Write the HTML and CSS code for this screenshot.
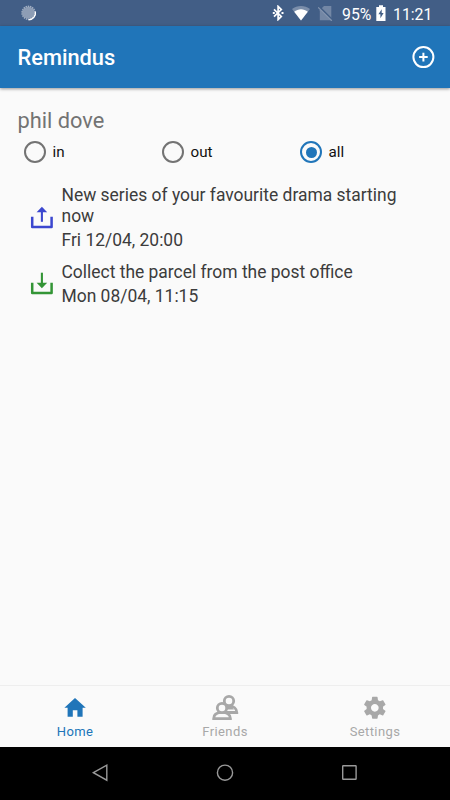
FILE: index.html
```html
<!DOCTYPE html>
<html lang="en">
<head>
    <meta charset="UTF-8">
    <meta name="viewport" content="width=device-width, initial-scale=1.0">
    <title>Remindus</title>
    <link rel="stylesheet" href="styles.css">
</head>
<body>

<div class="screen">
    <!-- Status bar -->
    <div class="status-bar">
        <svg class="sync-icon" width="16" height="16" viewBox="0 0 16 16">
            <circle cx="7.5" cy="7.8" r="6" fill="#8d9db5"/>
            <circle cx="7.5" cy="7.8" r="6.4" fill="none" stroke="#a0aec2" stroke-width="1.6" stroke-dasharray="1.5 0.7"/>
            <path d="M14.4 6.5A7 7 0 0 1 7.5 14.8" fill="none" stroke="#fff" stroke-width="1.3"/>
        </svg>
        <div class="status-right">
            <svg class="bluetooth" width="12" height="16" viewBox="0 0 12 16">
                <path d="M2 4.3L9.3 11.4L6.1 14.6V1.4L9.3 4.6L2 11.7" fill="none" stroke="#fff" stroke-width="1.7"/>
                <path d="M0.8 7h2v2h-2zM9.5 7h2v2h-2z" fill="#fff"/>
            </svg>
            <svg class="wifi" width="18" height="16" viewBox="0 0 18 16">
                <path d="M0 4C5 0 13 0 18 4L9 15.5z" fill="#7b8eaa"/>
                <path d="M2.2 6.7C6.2 3.3 11.8 3.3 15.8 6.7L9 15.5z" fill="#fff"/>
            </svg>
            <svg class="sim" width="15" height="16" viewBox="0 0 15 16">
                <path d="M6 1h7.3v14.2H1.8V5.2z" fill="#7387a5"/>
                <path d="M0.8 1.5L14.6 15.2" stroke="#425e86" stroke-width="2"/>
                <path d="M0.2 2.4L13.8 15.8" stroke="#8495af" stroke-width="1.2"/>
            </svg>
            <span class="percent">95%</span>
            <svg class="battery" width="10" height="16" viewBox="0 0 10 16">
                <path d="M3 0.3h4v1.6h2.5V16H0.3V1.9H3z" fill="#fff"/>
                <path d="M5.7 4.2L2.4 9.3h2v3.9l3.2-5.3h-1.9z" fill="#425e86"/>
            </svg>
            <span class="clock">11:21</span>
        </div>
    </div>

    <!-- App header -->
    <header class="header">
        <h1 class="title">Remindus</h1>
        <svg class="add" width="24" height="24" viewBox="0 0 24 24" fill="none" stroke="#fff" stroke-width="2">
            <circle cx="12.4" cy="12.1" r="10"/>
            <path d="M12.4 7.8v8.6M8.1 12.1h8.6"/>
        </svg>
    </header>

    <!-- Reminders -->
    <main class="content">
        <h2 class="user">phil dove</h2>
        <div class="filters">
            <div class="filter"><span class="radio"></span>in</div>
            <div class="filter"><span class="radio"></span>out</div>
            <div class="filter"><span class="radio checked"></span>all</div>
        </div>

        <div class="reminder">
            <svg class="arrow-icon" width="24" height="24" viewBox="0 0.5 24 24" fill="none" stroke="#3b47cf">
                <path d="M2.2 11.3V21.4H21.6V11.3" stroke-width="2.5" stroke-linejoin="round"/>
                <path d="M11.9 16.3V5" stroke-width="2.1"/>
                <path d="M11.9 1.2L17.2 6.7H6.6z" fill="#3b47cf" stroke="none"/>
            </svg>
            <div class="details">
                <p class="text">New series of your favourite drama starting now</p>
                <p class="date">Fri 12/04, 20:00</p>
            </div>
        </div>
        <div class="reminder">
            <svg class="arrow-icon" width="24" height="24" viewBox="0 0.5 24 24" fill="none" stroke="#339536">
                <path d="M2.2 11.3V21.4H21.6V11.3" stroke-width="2.5" stroke-linejoin="round"/>
                <path d="M11.9 1.2V13" stroke-width="2.1"/>
                <path d="M11.9 16.8L17.2 11.3H6.6z" fill="#339536" stroke="none"/>
            </svg>
            <div class="details">
                <p class="text">Collect the parcel from the post office</p>
                <p class="date">Mon 08/04, 11:15</p>
            </div>
        </div>
    </main>

    <!-- Tabs -->
    <nav class="tabs">
        <div class="tab active">
            <svg width="28" height="28" viewBox="0 0 28 28">
                <path d="M14 4L24.8 13.7H21.6V22.7H16.4V16.2H11.8V22.7H6.6V13.7H3.4z" fill="currentColor"/>
            </svg>
            <span>Home</span>
        </div>
        <div class="tab">
            <svg width="28" height="28" viewBox="0 0 28 28" fill="#fafafa" stroke="currentColor" stroke-width="2.8">
                <path d="M10.5 18.5H25.8C25.8 14.5 22.5 12 18 12S10.5 14.5 10.5 18.5z"/>
                <path d="M12 12H20L23 15.4H14z" fill="currentColor" stroke="none"/>
                <circle cx="18" cy="7" r="4.7"/>
                <path d="M2.7 24.6H19.4C19.4 20.6 16 18.4 11 18.4S2.7 20.6 2.7 24.6z"/>
                <circle cx="11" cy="14" r="4.7"/>
            </svg>
            <span>Friends</span>
        </div>
        <div class="tab">
            <svg width="28" height="28" viewBox="1 1 26 26">
                <g transform="translate(1.6 1.6) scale(1.02)">
                    <path fill="currentColor" d="M19.43 12.98c.04-.32.07-.64.07-.98s-.03-.66-.07-.98l2.11-1.65c.19-.15.24-.42.12-.64l-2-3.46c-.12-.22-.39-.3-.61-.22l-2.49 1c-.52-.4-1.08-.73-1.69-.98l-.38-2.65C14.46 2.18 14.25 2 14 2h-4c-.25 0-.46.18-.49.42l-.38 2.65c-.61.25-1.17.59-1.69.98l-2.49-1c-.23-.09-.49 0-.61.22l-2 3.46c-.13.22-.07.49.12.64l2.11 1.65c-.04.32-.07.65-.07.98s.03.66.07.98l-2.11 1.65c-.19.15-.24.42-.12.64l2 3.46c.12.22.39.3.61.22l2.49-1c.52.4 1.08.73 1.69.98l.38 2.65c.03.24.24.42.49.42h4c.25 0 .46-.18.49-.42l.38-2.65c.61-.25 1.17-.59 1.69-.98l2.49 1c.23.09.49 0 .61-.22l2-3.46c.12-.22.07-.49-.12-.64l-2.11-1.65zM12 15.5c-1.93 0-3.5-1.57-3.5-3.5s1.57-3.5 3.5-3.5 3.5 1.57 3.5 3.5-1.57 3.5-3.5 3.5z"/>
                </g>
            </svg>
            <span>Settings</span>
        </div>
    </nav>

    <!-- System navigation -->
    <div class="system-nav">
        <svg width="18" height="18" viewBox="0 0 18 18"><path d="M2.4 8.7L15.8 1.2V16.2z"/></svg>
        <svg width="18" height="18" viewBox="0 0 18 18"><circle cx="9" cy="8.7" r="7.6"/></svg>
        <svg width="18" height="18" viewBox="0 0 18 18"><rect x="1.7" y="1.8" width="13.4" height="13.4" rx="0.5"/></svg>
    </div>
</div>

</body>
</html>
```
FILE: styles.css
```css
* {
    box-sizing: border-box;
    margin: 0;
    padding: 0;
}

body {
    font-family: Roboto, "Liberation Sans", sans-serif;
    background: #fafafa;
}

svg {
    display: block;
    flex-shrink: 0;
}

.screen {
    display: flex;
    flex-direction: column;
    width: 450px;
    height: 800px;
    overflow: hidden;
}

.status-bar {
    display: flex;
    justify-content: space-between;
    height: 26px;
    padding: 5px 18px 0 21px;
    background: #425e86;
    color: #fff;
    font-size: 15.8px;
    line-height: 19px;
}

.status-right {
    display: flex;
}

.wifi {
    margin-left: 8px;
}

.sim {
    margin-left: 8px;
}

.percent {
    width: 28px;
    margin-left: 9px;
    white-space: nowrap;
}

.battery {
    margin-left: 6px;
}

.clock {
    width: 39px;
    margin-left: 7px;
    white-space: nowrap;
}

.header {
    display: flex;
    align-items: center;
    justify-content: space-between;
    height: 62px;
    padding: 0 15px 0 17.5px;
    background: #2075b9;
    box-shadow: 0 1px 3px rgba(0, 0, 0, 0.4);
    color: #fff;
}

.title {
    padding-top: 2px;
    font-size: 21.8px;
    font-weight: 500;
    line-height: 26px;
}

.content {
    flex: 1;
    padding: 19px 18px 0 17.5px;
}

.user {
    color: #737373;
    font-size: 21.8px;
    font-weight: 400;
    line-height: 28px;
}

.filters {
    display: grid;
    grid-template-columns: repeat(3, 138px);
    height: 34px;
    padding: 0 6.5px;
}

.filter {
    display: flex;
    align-items: center;
    height: 34px;
    color: #111;
    font-size: 15.2px;
    line-height: 20px;
}

.radio {
    width: 22px;
    height: 22px;
    margin-right: 6.5px;
    border: 2px solid #737373;
    border-radius: 50%;
}

.radio.checked {
    padding: 3.5px;
    border-color: #2075b9;
}

.radio.checked::before {
    content: "";
    display: block;
    height: 100%;
    border-radius: 50%;
    background: #2075b9;
}

.reminder {
    display: flex;
    align-items: center;
    margin-top: 16px;
    padding-left: 12px;
}

.reminder + .reminder {
    margin-top: 11px;
}

.arrow-icon {
    margin-bottom: 1px;
}

.details {
    width: 345px;
    margin-left: 8px;
    color: #3c3c3c;
    font-size: 17.45px;
}

.text {
    line-height: 21px;
}

.date {
    margin-top: 3px;
    line-height: 21px;
}

.tabs {
    display: grid;
    grid-template-columns: repeat(3, 1fr);
    height: 62px;
    border-top: 1px solid #eee;
}

.tab {
    display: flex;
    flex-direction: column;
    align-items: center;
    padding-top: 8px;
    color: #a8a8a8;
    font-size: 13px;
    letter-spacing: 0.4px;
    line-height: 20px;
}

.tab.active {
    color: #2075b9;
}

.system-nav {
    display: flex;
    justify-content: center;
    gap: 107px;
    height: 53px;
    padding-top: 17px;
    background: #000;
    fill: none;
    stroke: #999;
    stroke-width: 1.4;
}
```
